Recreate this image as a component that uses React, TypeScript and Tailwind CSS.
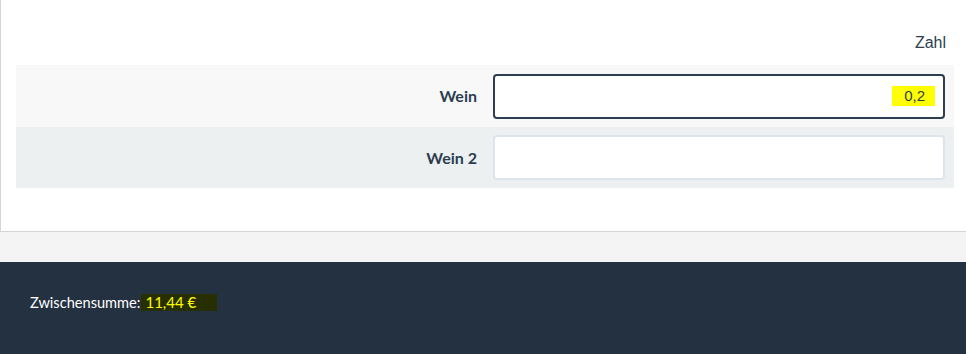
import React from "react";

export default function App() {
  return (
    <div className="w-full bg-[#f4f4f4]" style={{ fontFamily: "Lato, 'Noto Sans', sans-serif" }}>
      <div className="h-[232px] bg-white border-l border-b border-[#d4d4d4] pl-[15px] pr-[12px]">
        <div className="h-[65px] flex items-end justify-end pb-[10px] pr-[8px]">
          <span className="text-[16px] text-[#2c3e50]" style={{ fontFamily: "'Liberation Sans', Arial, sans-serif" }}>
            Zahl
          </span>
        </div>
        <div className="h-[62px] bg-[#f8f8f8] flex items-center">
          <div className="w-[461px] text-right text-[16px] font-bold text-[#2c3e50]">Wein</div>
          <div className="ml-[16px] mr-[9px] flex-1 h-[45px] bg-white border-2 border-[#2c3e50] rounded-[4px] flex items-center justify-end pr-[8px]">
            <span
              className="bg-[#ffff00] text-[15px] text-[#2c3e50] pl-[12px] pr-[10px] py-[1px] leading-[18px]"
              style={{ fontFamily: "'Liberation Sans', Arial, sans-serif" }}
            >
              0,2
            </span>
          </div>
        </div>
        <div className="h-[61px] bg-[#ecf0f1] flex items-center">
          <div className="w-[461px] text-right text-[16px] font-bold text-[#2c3e50]">Wein 2</div>
          <div className="ml-[16px] mr-[9px] flex-1 h-[45px] bg-white border-2 border-[#dde5ec] rounded-[4px]" />
        </div>
      </div>
      <div className="h-[30px]" />
      <div className="h-[92px] bg-[#243141] pl-[30px] pt-[32px]">
        <div className="flex items-center text-[14.6px] leading-[17px]">
          <span className="text-white">Zwischensumme:</span>
          <span className="ml-[1px] bg-[#272f00] text-[#ffff00] text-[15px] pl-[4px] w-[76px]">11,44 €</span>
        </div>
      </div>
    </div>
  );
}
